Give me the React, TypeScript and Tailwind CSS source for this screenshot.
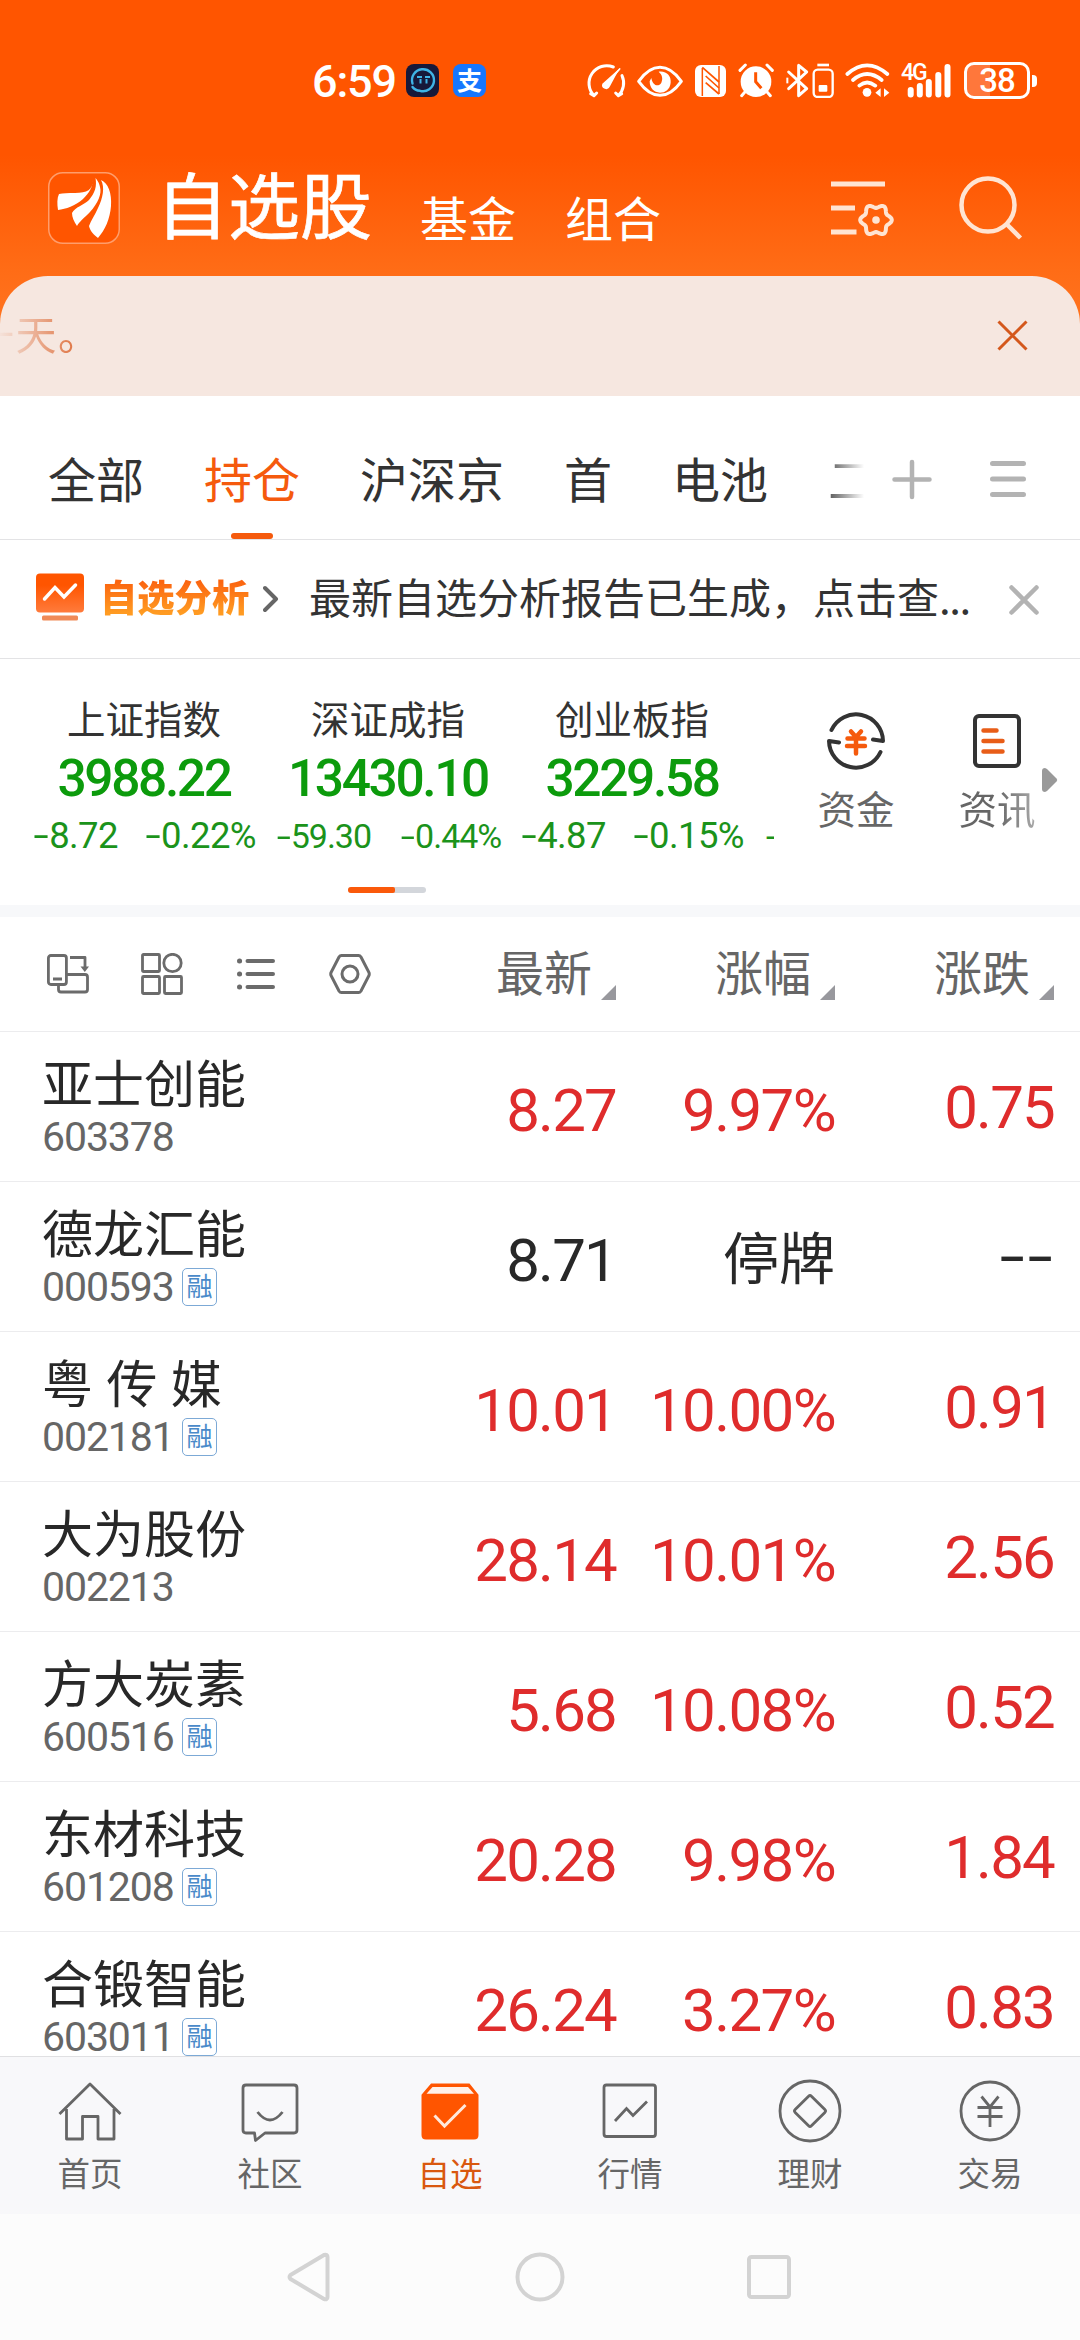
import React from "react";

type Stock = {
  name: string;
  code: string;
  margin?: boolean;
  price: string;
  pct: string;
  change: string;
  halted?: boolean;
};

const stocks: Stock[] = [
  { name: "亚士创能", code: "603378", price: "8.27", pct: "9.97%", change: "0.75" },
  { name: "德龙汇能", code: "000593", margin: true, price: "8.71", pct: "停牌", change: "--", halted: true },
  { name: "粤 传 媒", code: "002181", margin: true, price: "10.01", pct: "10.00%", change: "0.91" },
  { name: "大为股份", code: "002213", price: "28.14", pct: "10.01%", change: "2.56" },
  { name: "方大炭素", code: "600516", margin: true, price: "5.68", pct: "10.08%", change: "0.52" },
  { name: "东材科技", code: "601208", margin: true, price: "20.28", pct: "9.98%", change: "1.84" },
  { name: "合锻智能", code: "603011", margin: true, price: "26.24", pct: "3.27%", change: "0.83" },
];

const gearPath =
  Array.from({ length: 73 }, (_, i) => {
    const a = (i * 5 * Math.PI) / 180;
    const r = 13.9 + 1.9 * Math.cos(6 * a);
    return `${i ? "L" : "M"}${(45 + r * Math.cos(a)).toFixed(2)} ${(40 + r * Math.sin(a)).toFixed(2)}`;
  }).join("") + "Z";

function StatusBar() {
  return (
    <div className="flex h-[162px] items-center text-white">
      <span className="ml-[312px] w-[94px] translate-y-[1px] font-['Roboto'] text-[45px] leading-none font-medium tracking-[-1.2px]">6:59</span>
      <svg width="33" height="33" viewBox="0 0 33 33">
        <rect width="33" height="33" rx="8" fill="#17193a" />
        <path d="M6.500 19.500 A11 11 0 1 1 14 26.800 Q9 26.500 6.500 23" fill="none" stroke="#3fb4e6" strokeWidth="2.4" strokeLinecap="round" />
        <path d="M11 13h5M19 13h5M14.500 15v4.500M20.500 15v4.500" stroke="#3fb4e6" strokeWidth="2" />
      </svg>
      <span className="ml-[14px] flex h-[33px] w-[33px] items-center justify-center rounded-[8px] bg-[#1677ff]">
        <span className="-translate-y-[1px] text-[25px] leading-none font-bold">支</span>
      </span>
      <svg className="ml-[100px]" width="40" height="36" viewBox="46 68 120 108" fill="none" stroke="#fff" strokeWidth="9" strokeLinecap="round">
        <path d="M128 80 A53 53 0 0 0 70 166 M70 166 l-10 -6 M70 166 l8 -8" />
        <path d="M154 106 A53 53 0 0 1 143 166 M143 166 l10 -6 M143 166 l-8 -8" />
        <path d="M147 86 L106 134" strokeWidth="5" />
        <path d="M147 84 L95 130 A12 12 0 1 0 118 138 Z" fill="#fff" stroke="none" />
      </svg>
      <svg className="ml-[11px]" width="46" height="34" viewBox="201 70 138 102">
        <path d="M206 122 Q236 80 270 80 T334 122 Q304 164 270 164 T206 122Z" fill="none" stroke="#fff" strokeWidth="9" strokeLinejoin="round" />
        <path d="M266 93 C290 90 304 106 302 126 C300 146 286 156 270 156 C252 156 239 142 239 122 L244 112 C248 136 266 140 274 126 C280 112 276 102 266 93Z" fill="#fff" />
      </svg>
      <svg className="ml-[12px]" width="31" height="32" viewBox="375 73 93 96">
        <rect x="375" y="73" width="93" height="96" rx="18" fill="#fff" />
        <path d="M397 82 V166 M447 76 V160" stroke="#ff5500" strokeWidth="4.500" />
        <path d="M397 80 L447 124 M407 106 L447 142 M407 126 L447 160" stroke="#ff5500" strokeWidth="5" />
      </svg>
      <svg className="ml-[12px]" width="36" height="35" viewBox="504 70 108 105">
        <circle cx="558" cy="126" r="46" fill="#fff" />
        <path d="M510 92 L526 76 M591 76 L607 92 M524 158 L515 168 M592 158 L601 168" stroke="#fff" strokeWidth="9" strokeLinecap="round" />
        <path d="M557 98 V126 L574 146" fill="none" stroke="#ff5500" strokeWidth="9" />
      </svg>
      <svg className="ml-[12px]" width="48" height="35" viewBox="646 69 144 105" fill="none" stroke="#fff" strokeWidth="9">
        <path d="M654 96 L708 146 L684 167 V76 L708 96 L654 146" strokeLinejoin="round" strokeLinecap="round" />
        <path d="M650 113 V130" strokeWidth="6" />
        <rect x="729" y="89" width="57" height="82" rx="12" strokeWidth="7" />
        <path d="M740 75 H775" strokeWidth="8" />
        <rect x="744" y="135" width="26" height="20" rx="3" fill="#fff" stroke="none" />
      </svg>
      <svg className="ml-[11px]" width="45" height="35" viewBox="824 69 135 105" fill="none" stroke="#fff" strokeWidth="11" strokeLinecap="round">
        <path d="M831 102 Q890 50 951 102 M848 120 Q890 84 934 120 M867 137 Q890 118 915 137" />
        <circle cx="890" cy="157" r="13" fill="#fff" stroke="none" />
        <path d="M915 158 L931 145 V171Z M957 158 L941 145 V171Z" fill="#fff" stroke="none" />
      </svg>
      <div className="relative ml-[11px] h-[36px] w-[52px]">
        <span className="absolute top-0 left-0 font-['Roboto'] text-[23px] leading-[20px] font-medium tracking-[-2px]">4G</span>
        <svg className="absolute top-0 left-0" width="52" height="36" viewBox="0 0 52 36" stroke="#fff" strokeWidth="6" strokeLinecap="round">
          <path d="M9.700 27V31.500M18.800 23V31.500M27.800 19V31.500M37.300 12V31.500M46.500 4V31.500" />
        </svg>
      </div>
      <div className="ml-[11px] flex h-[37px] w-[66px] items-center justify-center rounded-[10px] border-[3px] border-white bg-[linear-gradient(90deg,#ff773b_38%,transparent_38%)]">
        <span className="font-['Roboto'] text-[33px] leading-none font-medium tracking-[-1px]">38</span>
      </div>
      <span className="ml-[2px] h-[12px] w-[5px] rounded-r-[4px] bg-white" />
    </div>
  );
}

function TitleBar() {
  return (
    <div className="flex h-[114px] items-start text-white">
      <svg className="mt-[10px] ml-[48px]" width="72" height="72" viewBox="0 0 72 72">
        <rect x="0.750" y="0.750" width="70.500" height="70.500" rx="14" fill="#ff5500" stroke="#ff9d6b" strokeWidth="1.500" />
        <path d="M45 7 C45 18 39 21 27 21 C20 21 15 21 11 22 C9 26 9 32 10 38 C18 37 27 34 35 27 C41 21 45 15 45 7Z" fill="#fff" />
        <path d="M47.500 6 C49 14 47 21 41 28 C36 33 27 35 24 41 C24 45 26 50 29 54 C31 50 36 46 42 40 C50 31 54 22 52 15 C51 10 49 8 47.500 6Z" fill="#fff" />
        <path d="M53 8 C57 15 55 26 50 36 C47 43 43 48 41 54 C42 59 46 63 50 66 C57 58 62 47 63 34 C64 21 60 11 53 8Z" fill="#fff" />
      </svg>
      <span className="ml-[36px] w-[264px] text-[72px] leading-[80px] [-webkit-text-stroke:0.7px_white]">自选股</span>
      <span className="mt-[30px] w-[145px] text-[48px] leading-[48px]">基金</span>
      <span className="mt-[30px] w-[266px] text-[48px] leading-[48px]">组合</span>
      <svg className="mt-[18px]" width="64" height="60" viewBox="0 0 64 60" fill="none" stroke="#ffe4d2" strokeWidth="5">
        <path d="M0 4H54M0 28H24M0 52H25.500" />
        <path d={gearPath} strokeWidth="4" strokeLinejoin="round" />
        <circle cx="45" cy="40" r="3.800" fill="#ffe4d2" stroke="none" />
      </svg>
      <svg className="mt-[13px] ml-[64px]" width="66" height="66" viewBox="0 0 66 66" fill="none" stroke="#ffe4d2" strokeWidth="4.500">
        <circle cx="29" cy="30" r="26.500" />
        <path d="M47.500 49 L61.500 63" />
      </svg>
    </div>
  );
}

function Notice() {
  return (
    <div className="flex h-[120px] items-center justify-between overflow-hidden rounded-t-[48px] bg-[#f6e7e0]">
      <span className="-ml-[27px] -translate-y-[4px] bg-[linear-gradient(90deg,transparent_24px,#dd6a35_110px)] bg-clip-text text-[41px] leading-[60px] tracking-[1.5px] text-transparent">一天。</span>
      <svg className="mr-[52px]" width="31" height="31" viewBox="0 0 31 31" stroke="#d4581c" strokeWidth="3">
        <path d="M1.500 1.500L29.500 29.500M29.500 1.500L1.500 29.500" />
      </svg>
    </div>
  );
}

function GroupTabs() {
  return (
    <div className="flex h-[144px] items-stretch border-b border-[#e3e3e5] bg-white text-[48px] leading-none text-[#333]">
      <div className="flex w-[868px] gap-[60px] overflow-hidden pl-[48px] whitespace-nowrap [&>span]:h-[143px] [&>span]:pt-[57px]">
        <span>全部</span>
        <span className="flex flex-col items-center text-[#f55a0d]">
          持仓
          <i className="mt-[32px] h-[6px] w-[42px] rounded-full bg-[#f55a0d]" />
        </span>
        <span>沪深京</span>
        <span>首</span>
        <span>电池</span>
        <span className="bg-[linear-gradient(90deg,#555_0,transparent_36px)] bg-clip-text text-transparent">二</span>
      </div>
      <svg className="mt-[63px] ml-[24px]" width="40" height="41" viewBox="0 0 40 41" stroke="#b3b3b3" strokeWidth="4.500" strokeLinecap="round">
        <path d="M20 3V38M2.500 20.500H37.500" />
      </svg>
      <svg className="mt-[64px] ml-[58px]" width="36" height="38" viewBox="0 0 36 38" stroke="#b3b3b3" strokeWidth="5" strokeLinecap="round">
        <path d="M2.500 3.500H33.500M2.500 19H33.500M2.500 34.500H33.500" />
      </svg>
    </div>
  );
}

function AnalysisBar() {
  return (
    <div className="flex h-[120px] items-center border-b border-[#e3e3e5] bg-white">
      <svg className="ml-[36px] -translate-y-[2px]" width="48" height="48" viewBox="0 0 48 48">
        <defs>
          <linearGradient id="analysis" x1="0" y1="0" x2="0" y2="1">
            <stop offset="0.3" stopColor="#ff5500" />
            <stop offset="1" stopColor="#ff7b3c" />
          </linearGradient>
        </defs>
        <rect y="0.500" width="48" height="39" rx="4" fill="url(#analysis)" />
        <path d="M8.500 26L19 14.500L28 24L39.500 12" fill="none" stroke="#fff" strokeWidth="3.500" strokeLinecap="round" />
        <rect x="6" y="42.500" width="36" height="5" rx="1.500" fill="#f08a57" />
      </svg>
      <span className="ml-[16px] w-[163px] -translate-y-[3px] bg-[linear-gradient(180deg,#fb6510_25%,#ff9b22_80%)] bg-clip-text text-[37.300px] leading-[56px] font-black text-transparent">自选分析</span>
      <svg width="16" height="28" viewBox="0 0 16 28" fill="none" stroke="#666" strokeWidth="4" strokeLinecap="round" strokeLinejoin="round">
        <path d="M2 3L13 14L2 25" />
      </svg>
      <span className="ml-[30px] w-[700px] -translate-y-[3px] text-[42px] leading-[56px] whitespace-nowrap text-[#333]">
        最新自选分析报告已生成，点击查<span className="tracking-[-1.4px]">...</span>
      </span>
      <svg className="translate-y-[1px]" width="30" height="30" viewBox="0 0 30 30" stroke="#b3b3b3" strokeWidth="4.500" strokeLinecap="round">
        <path d="M2.500 2.500L27.500 27.500M27.500 2.500L2.500 27.500" />
      </svg>
    </div>
  );
}

function Minus() {
  return <span className="inline-block w-[0.47em] scale-x-[1.5] text-center">-</span>;
}

function IndexCard({ name, value, change, pct, small }: { name: string; value: string; change: string; pct: string; small?: boolean }) {
  return (
    <div className="flex w-[244px] shrink-0 flex-col items-center whitespace-nowrap">
      <span className="h-[52px] text-[38.500px] leading-[50px] text-[#333]">{name}</span>
      <span className="h-[70px] font-['Roboto'] text-[51.500px] leading-[70px] font-medium tracking-[-2.4px] text-[#0c9b0c]">{value}</span>
      <span
        className={
          small
            ? "flex h-[44px] gap-[28px] font-['Roboto'] text-[34px] leading-[45px] tracking-[-1px] text-[#1b931b]"
            : "flex h-[44px] gap-[26px] font-['Roboto'] text-[36.500px] leading-[43px] tracking-[-0.6px] text-[#1b931b]"
        }
      >
        <span>
          <Minus />
          {change}
        </span>
        <span>
          <Minus />
          {pct}
        </span>
      </span>
    </div>
  );
}

function Indices() {
  return (
    <div className="flex h-[258px] flex-col border-b-[12px] border-[#f7f8fa] bg-white">
      <div className="flex h-[228px] items-start">
        <div className="flex w-[774px] overflow-hidden pt-[33px] pl-[22px]">
          <IndexCard name="上证指数" value="3988.22" change="8.72" pct="0.22%" />
          <IndexCard name="深证成指" value="13430.10" change="59.30" pct="0.44%" small />
          <IndexCard name="创业板指" value="3229.58" change="4.87" pct="0.15%" />
          <span className="mt-[122px] ml-[12px] shrink-0 font-['Roboto'] text-[34px] leading-[45px] text-[#1b931b]">-</span>
        </div>
        <div className="ml-[43px] flex w-[78px] flex-col items-center pt-[52px]">
          <svg width="60" height="60" viewBox="0 0 60 60" fill="none" stroke="#333" strokeWidth="4" strokeLinecap="round" strokeLinejoin="round">
            <path d="M5.500 19 A27 27 0 0 1 57 30 L47 28.500" />
            <path d="M54.500 41 A27 27 0 0 1 3 30 L13 31.500" />
            <path d="M25 20.500L30 26L35 20.500M21.500 27.500H38.500M21 35H39M30 27V42.500" stroke="#f55a0d" strokeWidth="4.500" />
          </svg>
          <span className="mt-[12px] text-[38.500px] leading-[48px] text-[#666]">资金</span>
        </div>
        <div className="ml-[63px] flex w-[78px] flex-col items-center pt-[52px]">
          <svg width="60" height="60" viewBox="0 0 60 60" fill="none" stroke="#333" strokeWidth="4" strokeLinecap="round">
            <rect x="8" y="5" width="44" height="50" rx="4" />
            <path d="M16.500 19.500H29.500M16.500 30H35.500M16.500 40.500H35.500" stroke="#e85d18" strokeWidth="4.500" />
          </svg>
          <span className="mt-[12px] bg-[linear-gradient(90deg,#666_50%,#aaa_100%)] bg-clip-text text-[38.500px] leading-[48px] text-transparent">资讯</span>
        </div>
        <svg className="mt-[109px] ml-[6px]" width="16" height="24" viewBox="0 0 16 24">
          <path d="M0 3 Q0 0 3 0 L5 1 L14.500 10.500 Q16 12 14.500 13.500 L5 23 L3 24 Q0 24 0 21Z" fill="#999" />
        </svg>
      </div>
      <div className="ml-[348px] flex h-[6px] w-[78px] overflow-hidden rounded-full bg-[#d3d6db]">
        <span className="w-[47px] rounded-r-[2px] bg-[#fa590a]" />
      </div>
    </div>
  );
}

function SortHead({ label }: { label: string }) {
  return (
    <div className="flex w-[219px] items-center justify-end gap-[9px]">
      <span className="-translate-y-[4px] text-[48px] leading-none text-[#666]">{label}</span>
      <svg className="mt-[36px]" width="15" height="15" viewBox="0 0 15 15">
        <path d="M15 0V15H0Z" fill="#98989d" />
      </svg>
    </div>
  );
}

function ListHead() {
  return (
    <div className="flex h-[115px] items-center border-b border-[#ececee] bg-white">
      <svg className="ml-[47px]" width="42" height="42" viewBox="0 0 42 42" fill="none" stroke="#6b6b6b" strokeWidth="2.800" strokeLinejoin="round">
        <rect x="1.400" y="2.500" width="18" height="29" rx="2.500" />
        <path d="M6 26H15M23 4.500H38V14" />
        <path d="M33.500 13.500H42L37.800 19Z" fill="#6b6b6b" stroke="none" />
        <path d="M20 21.500H38Q40.500 21.500 40.500 24V36.500Q40.500 39 38 39H14Q11.500 39 11.500 36.500V32" />
      </svg>
      <svg className="ml-[52px]" width="42" height="42" viewBox="0 0 42 42" fill="none" stroke="#6b6b6b" strokeWidth="2.800">
        <rect x="1.500" y="1.500" width="17" height="17" rx="1" />
        <circle cx="31.500" cy="10" r="8.700" />
        <rect x="1.500" y="23.500" width="17" height="17" rx="1" />
        <rect x="23.500" y="23.500" width="17" height="17" rx="1" />
      </svg>
      <svg className="ml-[54px]" width="38" height="34" viewBox="0 0 38 34" stroke="#6b6b6b" strokeLinecap="round">
        <path d="M10.500 4H36M10.500 17H36M10.500 30H36" strokeWidth="4" />
        <path d="M2.500 4H2.600M2.500 17H2.600M2.500 30H2.600" strokeWidth="5" />
      </svg>
      <svg className="ml-[54px]" width="42" height="42" viewBox="0 0 42 42" fill="none" stroke="#6b6b6b" strokeWidth="3">
        <path d="M12.500 2.500H29.500Q31 2.500 32 4L40 19.500Q40.500 21 40 22.500L32 38Q31 39.500 29.500 39.500H12.500Q11 39.500 10 38L2 22.500Q1.500 21 2 19.500L10 4Q11 2.500 12.500 2.500Z" />
        <circle cx="21" cy="21" r="8" />
      </svg>
      <div className="ml-[26px] flex">
        <SortHead label="最新" />
        <SortHead label="涨幅" />
        <SortHead label="涨跌" />
      </div>
    </div>
  );
}

function StockRow({ s }: { s: Stock }) {
  return (
    <div className={s.halted ? "flex h-[150px] shrink-0 items-start border-b border-[#ececee] bg-white text-[#282828]" : "flex h-[150px] shrink-0 items-start border-b border-[#ececee] bg-white text-[#df2c2c]"}>
      <div className="flex w-[397px] flex-col pt-[18px] pl-[42px]">
        <span className="h-[62px] text-[51px] leading-[62px] text-[#282828] [word-spacing:2px]">{s.name}</span>
        <span className="flex h-[44px] items-center text-[#666]">
          <span className="w-[132px] translate-y-[3px] font-['Roboto'] text-[41px] leading-[44px] tracking-[-1.1px]">{s.code}</span>
          {s.margin && (
            <i className="ml-[8px] flex h-[38px] w-[35px] translate-y-[3px] items-center justify-center rounded-[5px] border-[1.5px] border-[#7ca9d6] text-[26px] leading-[34px] text-[#4a8ac9] not-italic">
              <span className="-translate-y-[2px]">融</span>
            </i>
          )}
        </span>
      </div>
      <span className="w-[219px] pt-[43px] text-right font-['Roboto'] text-[60px] leading-[72px] tracking-[-1.8px]">{s.price}</span>
      {s.halted ? (
        <span className="w-[219px] pt-[37px] text-right text-[56px] leading-[72px]">{s.pct}</span>
      ) : (
        <span className="w-[219px] pt-[43px] text-right font-['Roboto'] text-[60px] leading-[72px] tracking-[-1.6px]">{s.pct}</span>
      )}
      {s.halted ? (
        <span className="flex w-[219px] justify-end pt-[39px] font-['Roboto'] text-[60px] leading-[72px]">
          <Minus />
          <Minus />
        </span>
      ) : (
        <span className="w-[219px] pt-[40px] text-right font-['Roboto'] text-[60px] leading-[72px] tracking-[-1.8px]">{s.change}</span>
      )}
    </div>
  );
}

const tabs: { label: string; active?: boolean; icon: React.ReactNode }[] = [
  { label: "首页", icon: <path d="M1.500 35L32 5L62.500 35M8.500 30V60H24.500V37.500H40V60H56V30" strokeLinejoin="round" /> },
  {
    label: "社区",
    icon: (
      <>
        <path d="M8 6H56Q59 6 59 9V51Q59 54 56 54H27L17.500 61.500L16.500 54H8Q5 54 5 51V9Q5 6 8 6Z" strokeLinejoin="round" />
        <path d="M19.500 33Q32 49 44.500 33" />
      </>
    ),
  },
  {
    label: "自选",
    active: true,
    icon: (
      <>
        <path d="M13.500 5.500H51L59.500 16V56Q59.500 59.500 56 59.500H8Q4.500 59.500 4.500 56V16Z" fill="#ff5500" stroke="#ff5500" strokeWidth="2" />
        <path d="M14.500 8H50L56 14.800H8.500Z" fill="#fff1e8" stroke="none" />
        <path d="M16.500 36.500L26.500 47L47.500 26" stroke="#ffe9dc" strokeWidth="3" />
      </>
    ),
  },
  {
    label: "行情",
    icon: (
      <>
        <rect x="6" y="6" width="51.500" height="51.500" rx="2.500" />
        <path d="M17 42L28.500 29.500L35 36.500L49 22.500" />
      </>
    ),
  },
  {
    label: "理财",
    icon: (
      <>
        <circle cx="32" cy="32" r="30" />
        <rect x="20.500" y="20.500" width="23" height="23" rx="2" transform="rotate(45 32 32)" />
      </>
    ),
  },
  {
    label: "交易",
    icon: (
      <>
        <circle cx="32" cy="32" r="29" />
        <path d="M23.500 17.500L32 28L40.500 17.500M19.500 28.500H44.500M19.500 37.500H44.500M32 28V48" />
      </>
    ),
  },
];

function BottomTabs() {
  return (
    <div className="grid h-[158px] shrink-0 grid-cols-6 border-t border-[#e0e0e2] bg-[#f8f8fa]">
      {tabs.map((t) => (
        <div key={t.label} className="flex flex-col items-center pt-[22px]">
          <svg width="64" height="64" viewBox="0 0 64 64" fill="none" stroke="#666" strokeWidth="2.800">
            {t.icon}
          </svg>
          <span className={t.active ? "mt-[8px] text-[32.500px] leading-[42px] text-[#d9580f]" : "mt-[8px] text-[32.500px] leading-[42px] text-[#666]"}>{t.label}</span>
        </div>
      ))}
    </div>
  );
}

function SystemNav() {
  return (
    <div className="flex h-[126px] shrink-0 items-center bg-[#fcfcfc]">
      <svg className="ml-[287px]" width="44" height="50" viewBox="0 0 44 50" fill="none" stroke="#d3d3d3" strokeWidth="4" strokeLinejoin="round">
        <path d="M3.500 23Q1.500 25 3.500 27L37 47Q40.500 48 40.500 45V5Q40.500 2 37 3Z" />
      </svg>
      <svg className="ml-[184px]" width="50" height="50" viewBox="0 0 50 50" fill="none" stroke="#d3d3d3" strokeWidth="4">
        <circle cx="25" cy="25" r="22.500" />
      </svg>
      <svg className="ml-[182px]" width="44" height="44" viewBox="0 0 44 44" fill="none" stroke="#d3d3d3" strokeWidth="4">
        <rect x="2" y="2" width="40" height="40" rx="2.500" />
      </svg>
    </div>
  );
}

export default function App() {
  return (
    <div className="flex h-[2340px] w-[1080px] flex-col overflow-hidden bg-[linear-gradient(180deg,#ff5500_0,#ff5500_155px,#ff6c16_270px,#ff7420_326px)] font-['Noto_Sans_CJK_SC',sans-serif]">
      <StatusBar />
      <TitleBar />
      <Notice />
      <GroupTabs />
      <AnalysisBar />
      <Indices />
      <ListHead />
      <div className="flex h-[1024px] shrink-0 flex-col overflow-hidden bg-white">
        {stocks.map((s) => (
          <StockRow key={s.code} s={s} />
        ))}
      </div>
      <BottomTabs />
      <SystemNav />
    </div>
  );
}
